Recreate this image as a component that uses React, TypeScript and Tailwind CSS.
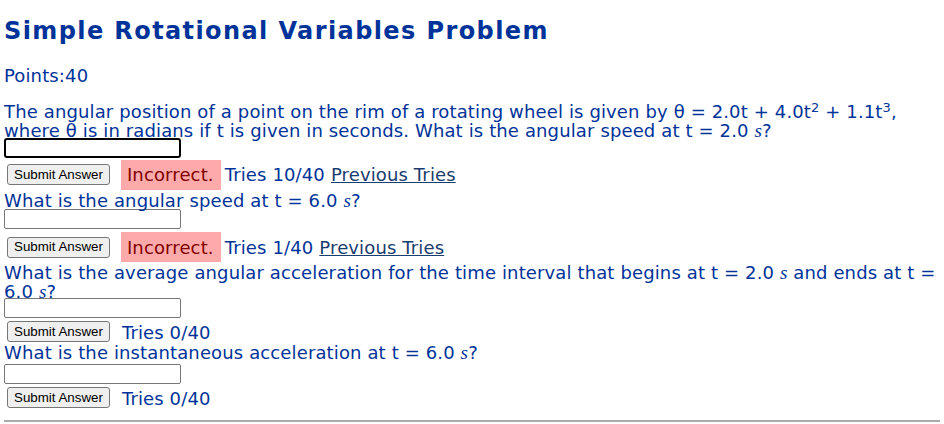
import React from 'react';

const S: React.FC = () => (
    <span className="font-['Liberation_Serif',serif] italic text-[19px]">s</span>
);

const Answer: React.FC<{ focused?: boolean }> = ({ focused }) => (
    <input
        type="text"
        className={
            focused
                ? 'block w-[177px] h-[20px] border-2 border-black rounded-[3px] bg-white outline-none'
                : 'block w-[177px] h-[20px] border border-[#767676] rounded-[2px] bg-white outline-none'
        }
    />
);

const Submit: React.FC = () => (
    <button className="ml-[3px] h-[21px] px-[6px] border border-[#767676] rounded-[3px] bg-[#efefef] text-black text-[13.33px] tracking-normal font-['Liberation_Sans',Arial,sans-serif] leading-none">
        Submit Answer
    </button>
);

const Incorrect: React.FC = () => (
    <span className="ml-[11px] bg-[#ffaaaa] text-[#800000] pl-[6px] pr-[7px] h-[30px] flex items-center">Incorrect.</span>
);

export default function App() {
    return (
        <div className="px-[4px] bg-white min-h-screen font-['DejaVu_Sans',Verdana,sans-serif] text-[18px] tracking-[0.13px] leading-[19px] text-[#003399]">
            <h1 className="pt-[17px] text-[24px] tracking-[1.4px] leading-[28px] font-bold">Simple Rotational Variables Problem</h1>
            <p className="mt-[21px]">Points:40</p>

            <p className="mt-[17px]">
                The angular position of a point on the rim of a rotating wheel is given by θ = 2.0t + 4.0t
                <sup className="text-[13px]">2</sup> + 1.1t<sup className="text-[13px]">3</sup>,<br />
                where θ is in radians if t is given in seconds. What is the angular speed at t = 2.0 <S />?
            </p>
            <div className="-mt-[2px]">
                <Answer focused />
            </div>
            <div className="flex items-center mt-[1px] h-[31px]">
                <Submit />
                <Incorrect />
                <span className="ml-[4px]">Tries 10/40</span>
                <a className="ml-[6px] underline text-[#1a3c6e]" href="#">Previous Tries</a>
            </div>

            <p className="mt-[1px]">
                What is the angular speed at t = 6.0 <S />?
            </p>
            <div className="-mt-[1px]">
                <Answer />
            </div>
            <div className="flex items-center mt-[3px] h-[30px]">
                <Submit />
                <Incorrect />
                <span className="ml-[4px]">Tries 1/40</span>
                <a className="ml-[6px] underline text-[#1a3c6e]" href="#">Previous Tries</a>
            </div>

            <p className="mt-[1px]">
                What is the average angular acceleration for the time interval that begins at t = 2.0 <S /> and ends at t =<br />
                6.0 <S />?
            </p>
            <div className="-mt-[3px]">
                <Answer />
            </div>
            <div className="flex items-end h-[24px]">
                <Submit />
                <span className="ml-[12px]">Tries 0/40</span>
            </div>

            <p className="mt-[1px]">
                What is the instantaneous acceleration at t = 6.0 <S />?
            </p>
            <div className="mt-[2px]">
                <Answer />
            </div>
            <div className="flex items-end h-[24px]">
                <Submit />
                <span className="ml-[12px]">Tries 0/40</span>
            </div>

            <hr className="mt-[12px] border-t-2 border-[#aaaaaa]" />
        </div>
    );
}
